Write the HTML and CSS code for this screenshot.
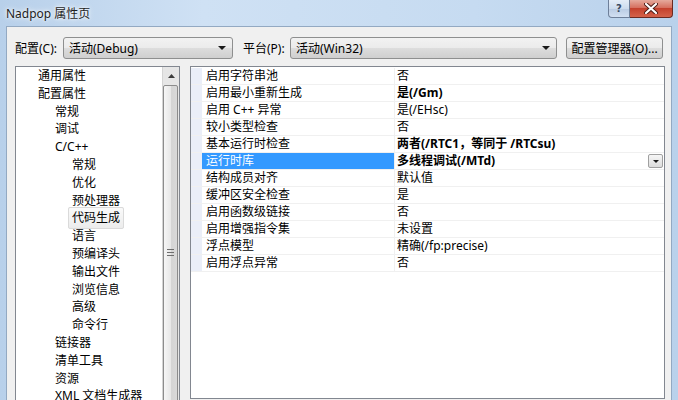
FILE: index.html
```html
<!DOCTYPE html>
<html lang="zh-CN">
<head>
    <meta charset="UTF-8">
    <title>Nadpop 属性页</title>
    <link rel="stylesheet" href="styles.css">
</head>
<body>
    <div class="window">
        <div class="titlebar">
            <span class="title">Nadpop 属性页</span>
            <div class="caption-buttons">
                <span class="cap-btn help">?</span>
                <span class="cap-btn close">
                    <svg width="14" height="11" viewBox="0 0 14 11">
                        <path d="M2 1 L12 10 M12 1 L2 10" stroke="#4a1a14" stroke-width="4" stroke-linecap="round"/>
                        <path d="M2 1 L12 10 M12 1 L2 10" stroke="#fff" stroke-width="2.2" stroke-linecap="round"/>
                    </svg>
                </span>
            </div>
        </div>

        <div class="client">
            <div class="toolbar">
                <label class="tb-label label-config">配置(C):</label>
                <div class="combo combo-config">
                    <span>活动(Debug)</span>
                    <span class="arrow"></span>
                </div>
                <label class="tb-label label-platform">平台(P):</label>
                <div class="combo combo-platform">
                    <span>活动(Win32)</span>
                    <span class="arrow"></span>
                </div>
                <button class="btn">配置管理器(O)...</button>
            </div>

            <div class="main">
                <div class="tree">
                    <ul class="tree-list">
                        <li class="lvl0">通用属性</li>
                        <li class="lvl0">配置属性</li>
                        <li class="lvl1">常规</li>
                        <li class="lvl1">调试</li>
                        <li class="lvl1">C/C++</li>
                        <li class="lvl2">常规</li>
                        <li class="lvl2">优化</li>
                        <li class="lvl2">预处理器</li>
                        <li class="lvl2"><span class="selected">代码生成</span></li>
                        <li class="lvl2">语言</li>
                        <li class="lvl2">预编译头</li>
                        <li class="lvl2">输出文件</li>
                        <li class="lvl2">浏览信息</li>
                        <li class="lvl2">高级</li>
                        <li class="lvl2">命令行</li>
                        <li class="lvl1">链接器</li>
                        <li class="lvl1">清单工具</li>
                        <li class="lvl1">资源</li>
                        <li class="lvl1">XML 文档生成器</li>
                    </ul>
                    <div class="scrollbar">
                        <div class="sb-up">
                            <svg width="7" height="4" viewBox="0 0 7 4"><path d="M0 4 L3.5 0 L7 4 Z" fill="#3c3c3c"/></svg>
                        </div>
                        <div class="sb-thumb">
                            <svg class="grip" width="7" height="7" viewBox="0 0 7 7">
                                <path d="M0 0.5 H7 M0 3.5 H7 M0 6.5 H7" stroke="#6e6e6e" stroke-width="1"/>
                            </svg>
                        </div>
                    </div>
                </div>

                <div class="grid">
                    <div class="row"><div class="name">启用字符串池</div><div class="value">否</div></div>
                    <div class="row"><div class="name">启用最小重新生成</div><div class="value bold">是(/Gm)</div></div>
                    <div class="row"><div class="name">启用 C++ 异常</div><div class="value">是(/EHsc)</div></div>
                    <div class="row"><div class="name">较小类型检查</div><div class="value">否</div></div>
                    <div class="row"><div class="name">基本运行时检查</div><div class="value bold">两者(/RTC1，等同于 /RTCsu)</div></div>
                    <div class="row active">
                        <div class="name">运行时库</div>
                        <div class="value bold">多线程调试(/MTd)<span class="drop"><span class="arrow"></span></span></div>
                    </div>
                    <div class="row"><div class="name">结构成员对齐</div><div class="value">默认值</div></div>
                    <div class="row"><div class="name">缓冲区安全检查</div><div class="value">是</div></div>
                    <div class="row"><div class="name">启用函数级链接</div><div class="value">否</div></div>
                    <div class="row"><div class="name">启用增强指令集</div><div class="value">未设置</div></div>
                    <div class="row"><div class="name">浮点模型</div><div class="value">精确(/fp:precise)</div></div>
                    <div class="row"><div class="name">启用浮点异常</div><div class="value">否</div></div>
                </div>
            </div>
        </div>
    </div>
</body>
</html>
```

FILE: styles.css
```css
body {
    margin: 0;
    font-family: "Segoe UI", "Noto Sans", "Noto Sans CJK SC", sans-serif;
    font-size: 12px;
    color: #000;
    overflow: hidden;
}

.window {
    width: 678px;
    height: 400px;
    box-sizing: border-box;
    padding: 0 6px;
    background: linear-gradient(to right, #b8d0ea, #cfe1f4 30%, #c6dbf1 70%, #b9d1eb);
    display: flex;
    flex-direction: column;
    overflow: hidden;
}

.titlebar {
    height: 26px;
    flex: none;
    display: flex;
    align-items: flex-start;
}

.title {
    margin-top: 4px;
    color: #1e1e1e;
    text-shadow: 0 0 6px #fff, 0 0 3px #fff;
}

.caption-buttons {
    display: flex;
    margin-left: auto;
    margin-right: -1px;
}

.cap-btn {
    flex: none;
    height: 18px;
    display: flex;
    align-items: center;
    justify-content: center;
    box-sizing: border-box;
    border: 1px solid #6e7f99;
    border-top: none;
}

.help {
    width: 22px;
    border-radius: 0 0 0 4px;
    background: linear-gradient(#e4edf8, #cddcee 50%, #b9cbe3 51%, #d2e0f2);
    color: #3a4a62;
    font-family: "DejaVu Sans", sans-serif;
    font-size: 10px;
    font-weight: bold;
}

.close {
    width: 43px;
    border-left: none;
    border-color: #6a2a22;
    border-radius: 0 0 4px 0;
    background: linear-gradient(#e5a99c, #d6705f 45%, #c4412d 50%, #d4624a);
}

.client {
    flex: 1;
    background: #f0f0f0;
    border: 1px solid #93a9c2;
    border-bottom: none;
    padding: 10px 6px 0 8px;
    display: flex;
    flex-direction: column;
}

.toolbar {
    display: flex;
    align-items: center;
    height: 22px;
}

.tb-label {
    flex: none;
}

.label-config {
    width: 48px;
}

.label-platform {
    width: 47px;
    margin-left: 10px;
}

.combo {
    flex: none;
    height: 22px;
    box-sizing: border-box;
    border: 1px solid #8e8f8f;
    border-radius: 3px;
    background: linear-gradient(#f2f2f2, #ebebeb 50%, #dddddd 51%, #cfcfcf);
    display: flex;
    align-items: center;
    justify-content: space-between;
    padding: 0 6px 0 5px;
}

.combo-config {
    width: 170px;
}

.combo-platform {
    width: 267px;
}

.arrow {
    width: 0;
    height: 0;
    border-left: 4px solid transparent;
    border-right: 4px solid transparent;
    border-top: 4px solid #1a1a1a;
}

.btn {
    flex: none;
    width: 97px;
    height: 22px;
    margin-left: 9px;
    padding: 0;
    font-family: inherit;
    font-size: 12px;
    color: #000;
    border: 1px solid #8e8f8f;
    border-radius: 3px;
    background: linear-gradient(#f2f2f2, #ebebeb 50%, #dddddd 51%, #cfcfcf);
}

.main {
    flex: 1;
    display: flex;
    gap: 10px;
    margin-top: 7px;
    min-height: 0;
}

.tree {
    width: 165px;
    flex: none;
    box-sizing: border-box;
    height: 340px;
    background: #fff;
    border: 1px solid #828790;
    display: grid;
    grid-template-columns: 146px 17px;
    overflow: hidden;
}

.tree-list {
    list-style: none;
    margin: 0;
    padding: 0;
    overflow: hidden;
}

.tree-list li {
    height: 17.8px;
    line-height: 17.8px;
    white-space: nowrap;
}

.lvl0 {
    padding-left: 22px;
}

.lvl1 {
    padding-left: 39px;
}

.lvl2 {
    padding-left: 56px;
}

.tree-list .selected {
    margin-left: -4px;
    padding: 1px 3px 2px 3px;
    border: 1px solid #dadada;
    border-radius: 2px;
    background: linear-gradient(#fafafa, #ececec);
}

.scrollbar {
    background: #e6e6e6;
    border-left: 1px solid #d4d4d4;
    box-sizing: border-box;
    display: flex;
    flex-direction: column;
}

.sb-up {
    height: 17px;
    flex: none;
    display: flex;
    align-items: center;
    justify-content: center;
}

.sb-thumb {
    flex: none;
    height: 335px;
    margin: 1px 1px 0 0;
    box-sizing: border-box;
    border: 1px solid #8c8c8c;
    border-radius: 2px;
    background: linear-gradient(to right, #f6f6f6, #e8e8e8 50%, #d4d4d4 51%, #d9d9d9);
    display: flex;
    justify-content: center;
    align-items: flex-start;
    padding-top: 163px;
}

.grid {
    flex: 1;
    height: 333px;
    box-sizing: border-box;
    background: #fff;
    border: 1px solid #828790;
    padding: 1px 0 0 0;
}

.row {
    display: flex;
    height: 17px;
    box-sizing: border-box;
    border-bottom: 1px solid #f0f0f0;
    padding-left: 11px;
    background: linear-gradient(to right, #eaeef8 11px, transparent 11px);
}

.name {
    width: 193px;
    flex: none;
    padding-left: 4px;
    box-sizing: border-box;
    border-right: 1px solid #f0f0f0;
    line-height: 16px;
    white-space: nowrap;
}

.value {
    flex: 1;
    padding-left: 2px;
    line-height: 16px;
    white-space: nowrap;
    display: flex;
    align-items: center;
}

.bold {
    font-weight: bold;
}

.row.active .name {
    background: #3399ff;
    color: #fff;
}

.drop {
    margin-left: auto;
    margin-right: 1px;
    width: 15px;
    height: 14px;
    box-sizing: border-box;
    border: 1px solid #a0a0a0;
    border-radius: 2px;
    background: linear-gradient(#f6f6f6, #dcdcdc);
    display: flex;
    align-items: center;
    justify-content: center;
}

.drop .arrow {
    border-left-width: 3px;
    border-right-width: 3px;
    border-top-width: 3px;
}
```
